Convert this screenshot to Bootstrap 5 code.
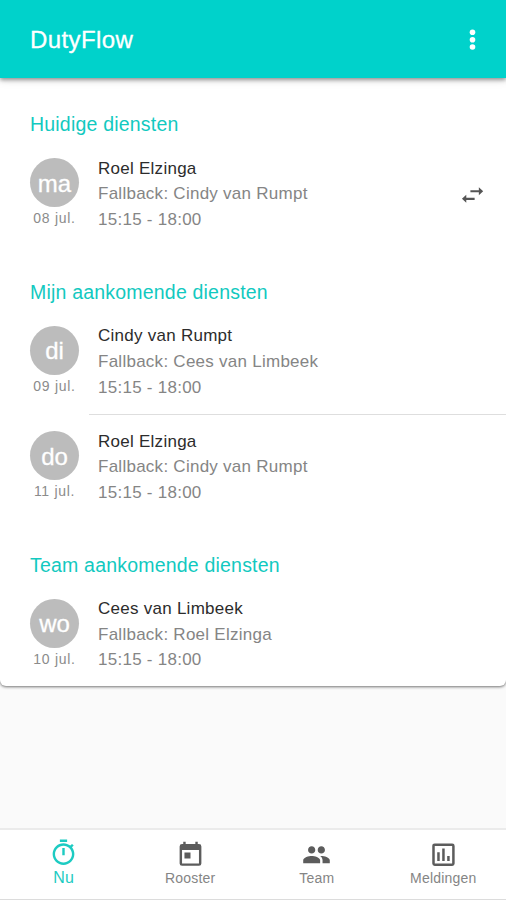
<!DOCTYPE html>
<html lang="nl">
<head>
<meta charset="utf-8">
<meta name="viewport" content="width=device-width, initial-scale=1">
<title>DutyFlow</title>
<link rel="stylesheet" href="https://cdn.jsdelivr.net/npm/bootstrap@5.3.0/dist/css/bootstrap.min.css">
<style>
body{font-family:"Liberation Sans",Arial,sans-serif;background:#fafafa;height:900px;overflow:hidden;letter-spacing:.3px}
.app-bar{background:#00d2cb;height:78px;padding:0 20px 0 30px;box-shadow:0 2px 4px rgba(0,0,0,.38),0 4px 8px rgba(0,0,0,.08);z-index:2}
.app-title{font-size:24px;letter-spacing:.4px;line-height:30px;padding-top:2px;-webkit-text-stroke:.3px currentColor}
.duty-card{border-radius:0 0 6px 6px;height:608px;box-shadow:0 1px 3px rgba(0,0,0,.55)}
.duty-heading{height:63.3px;padding:0 30px 4px;color:#12c9c0;font-size:19.5px;letter-spacing:.2px;line-height:26px;margin:0;font-weight:400}
.duty-heading.follow{height:62.3px}
.duty-row{height:105.3px;padding:14.5px 20px 0 30px}
.day-col{width:49px;margin:2.5px 19px 0 0}
.day-circle{width:49px;height:49px;background:#bcbcbc;font-size:24px;letter-spacing:0;padding-top:2px;-webkit-text-stroke:.3px currentColor}
.day-date{font-size:14px;letter-spacing:.7px;line-height:20px;padding-top:1px;color:#8b8b8b;white-space:nowrap}
.duty-text{font-size:17px;letter-spacing:.26px;line-height:25.6px;color:#858585}
.duty-name{color:#2c2c2c}
.duty-line{margin-left:89px;height:1px;background:#dedede;margin-bottom:-1px}
.swap-icon{margin-top:26px}
.tab-bar{height:72px;border-top:2px solid #ebebeb;border-bottom:1px solid #dcdcdc;padding-top:8px}
.tab-item{color:#858585;font-size:14px;letter-spacing:.2px;line-height:18px;flex:1 1 0;padding:1px 0 0 1px}
.tab-item svg{color:#5c5c5c}
.tab-item span{padding-top:1px}
.tab-item.current,.tab-item.current svg{color:#1dcbc2}
.tab-item.current span{font-size:16px}
</style>
<script src="https://cdn.jsdelivr.net/npm/bootstrap@5.3.0/dist/js/bootstrap.bundle.min.js"></script>
</head>
<body class="d-flex flex-column">
<header class="app-bar d-flex align-items-center justify-content-between text-white position-relative flex-shrink-0">
  <div class="app-title">DutyFlow</div>
  <svg width="26" height="32" viewBox="0 0 26 32" fill="currentColor" aria-label="Menu"><circle cx="12.500" cy="9.300" r="2.8"/><circle cx="12.500" cy="16.7" r="2.8"/><circle cx="12.500" cy="24" r="2.8"/></svg>
</header>
<main class="duty-card bg-white flex-shrink-0">
  <h2 class="duty-heading d-flex align-items-end">Huidige diensten</h2>
  <div class="duty-row d-flex align-items-start">
    <div class="day-col text-center"><div class="day-circle rounded-circle text-white d-flex align-items-center justify-content-center">ma</div><div class="day-date">08 jul.</div></div>
    <div class="duty-text flex-grow-1"><div class="duty-name">Roel Elzinga</div><div>Fallback: Cindy van Rumpt</div><div>15:15 - 18:00</div></div>
    <svg class="swap-icon" width="26" height="26" viewBox="0 0 24 24" fill="#555"><path d="M5.800 11.800 1.800 15.500l4 3.700v-2.700h7.700v-2H5.800zM21.400 8.500l-4-3.700v2.700H9.600v2h7.800v2.700z"/></svg>
  </div>
  <h2 class="duty-heading follow d-flex align-items-end">Mijn aankomende diensten</h2>
  <div class="duty-row d-flex align-items-start">
    <div class="day-col text-center"><div class="day-circle rounded-circle text-white d-flex align-items-center justify-content-center">di</div><div class="day-date">09 jul.</div></div>
    <div class="duty-text"><div class="duty-name">Cindy van Rumpt</div><div>Fallback: Cees van Limbeek</div><div>15:15 - 18:00</div></div>
  </div>
  <div class="duty-line"></div>
  <div class="duty-row d-flex align-items-start">
    <div class="day-col text-center"><div class="day-circle rounded-circle text-white d-flex align-items-center justify-content-center">do</div><div class="day-date">11 jul.</div></div>
    <div class="duty-text"><div class="duty-name">Roel Elzinga</div><div>Fallback: Cindy van Rumpt</div><div>15:15 - 18:00</div></div>
  </div>
  <h2 class="duty-heading follow d-flex align-items-end">Team aankomende diensten</h2>
  <div class="duty-row d-flex align-items-start">
    <div class="day-col text-center"><div class="day-circle rounded-circle text-white d-flex align-items-center justify-content-center">wo</div><div class="day-date">10 jul.</div></div>
    <div class="duty-text"><div class="duty-name">Cees van Limbeek</div><div>Fallback: Roel Elzinga</div><div>15:15 - 18:00</div></div>
  </div>
</main>
<nav class="tab-bar bg-white d-flex mt-auto flex-shrink-0">
  <div class="tab-item current d-flex flex-column align-items-center">
    <svg width="29" height="29" viewBox="0 0 24 24" fill="currentColor"><path transform="translate(0 -.5)" d="M15 1H9v2h6V1zm-4 13h2V8h-2v6zm8.030-6.610l1.420-1.420c-.430-.510-.900-.990-1.410-1.410l-1.420 1.420C16.070 4.740 14.120 4 12 4c-4.970 0-9 4.030-9 9s4.020 9 9 9 9-4.030 9-9c0-2.120-.740-4.070-1.970-5.610zM12 20c-3.870 0-7-3.130-7-7s3.130-7 7-7 7 3.130 7 7-3.130 7-7 7z"/></svg>
    <span>Nu</span>
  </div>
  <div class="tab-item d-flex flex-column align-items-center">
    <svg width="29" height="29" viewBox="0 0 24 24" fill="currentColor"><path d="M19 3h-1V1h-2v2H8V1H6v2H5a2 2 0 0 0-2 2v14a2 2 0 0 0 2 2h14a2 2 0 0 0 2-2V5a2 2 0 0 0-2-2zm0 16H5V8h14v11zM7 10h5v5H7z" transform="translate(0 1.200)"/></svg>
    <span>Rooster</span>
  </div>
  <div class="tab-item d-flex flex-column align-items-center">
    <svg width="29" height="29" viewBox="0 0 24 24" fill="currentColor"><path transform="translate(0 1.100)" d="M16 11c1.660 0 2.990-1.340 2.990-3S17.660 5 16 5s-3 1.340-3 3 1.340 3 3 3zm-8 0c1.660 0 2.990-1.340 2.990-3S9.660 5 8 5 5 6.340 5 8s1.340 3 3 3zm0 2c-2.330 0-7 1.170-7 3.500V19h14v-2.500c0-2.330-4.670-3.500-7-3.500zm8 0c-.290 0-.620.020-.970.050 1.160.840 1.970 1.970 1.970 3.450V19h6v-2.500c0-2.330-4.670-3.500-7-3.500z"/></svg>
    <span>Team</span>
  </div>
  <div class="tab-item d-flex flex-column align-items-center">
    <svg width="29" height="29" viewBox="0 0 24 24" fill="currentColor"><path transform="translate(-.4 .7) scale(1.030)" d="M9 17H7v-7h2v7zm4 0h-2V7h2v10zm4 0h-2v-4h2v4zm2 2.100H5V5h14v14.100zM19 3H5a2 2 0 0 0-2 2v14a2 2 0 0 0 2 2h14a2 2 0 0 0 2-2V5a2 2 0 0 0-2-2z"/></svg>
    <span>Meldingen</span>
  </div>
</nav>
</body>
</html>
